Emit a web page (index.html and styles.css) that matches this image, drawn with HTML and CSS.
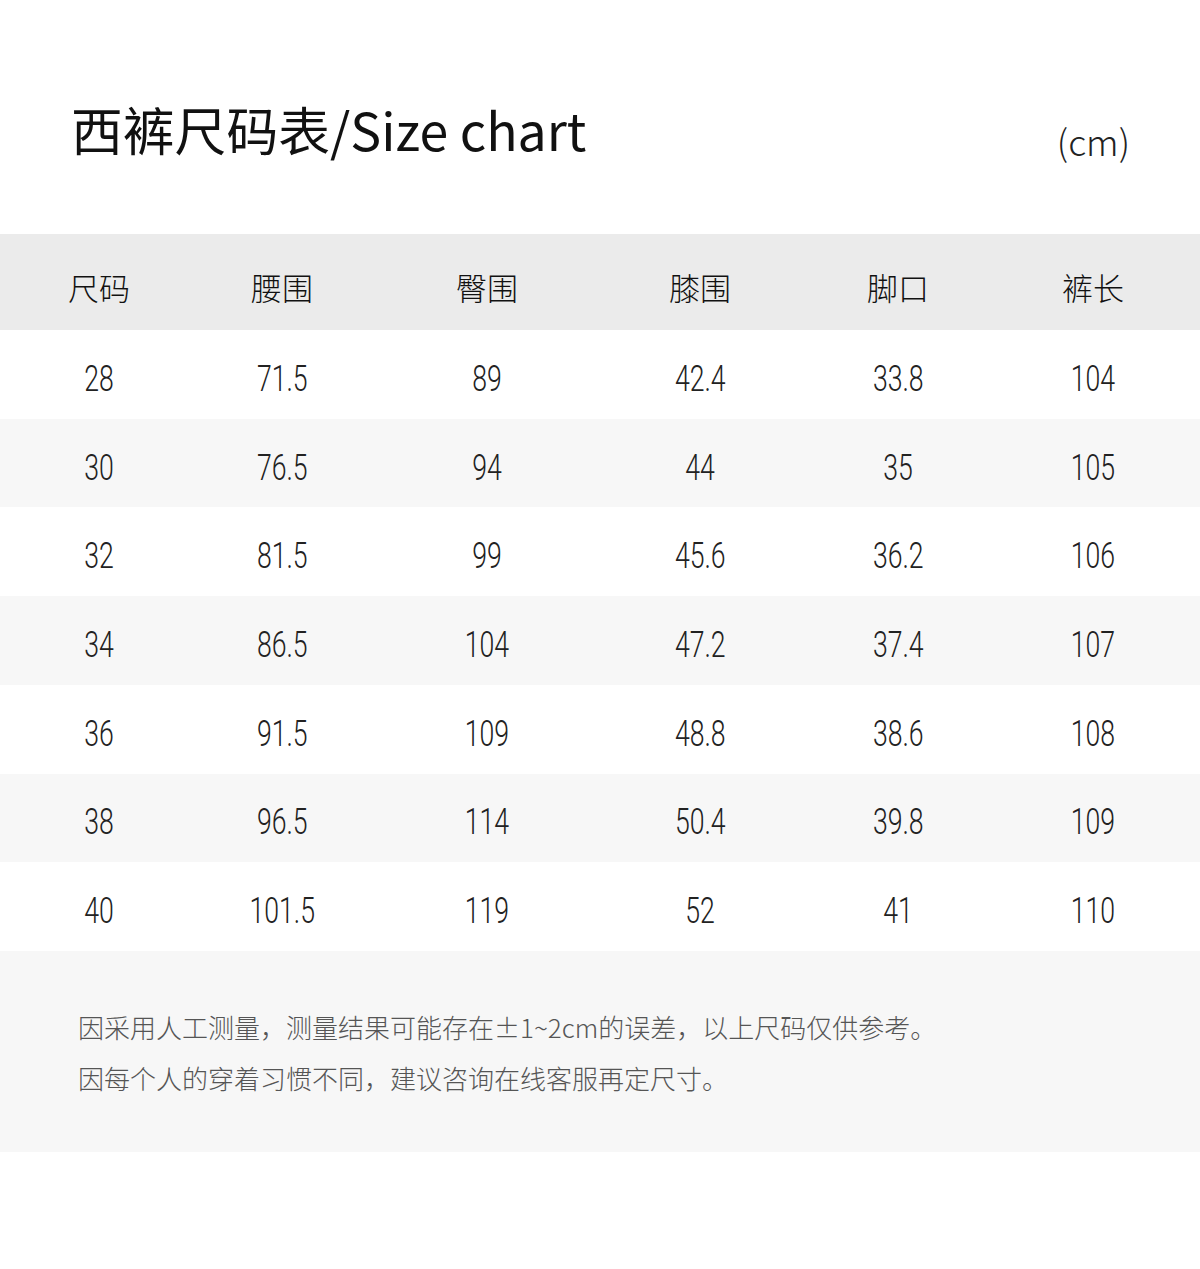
FILE: index.html
```html
<!DOCTYPE html>
<html lang="zh-CN">
<head>
<meta charset="utf-8">
<title>西裤尺码表</title>
<link rel="stylesheet" href="styles.css">
</head>
<body>
<div class="page">
  <div class="top">
    <h1 class="title">西裤尺码表/Size chart</h1>
    <div class="unit">(cm)</div>
  </div>
  <div class="table">
    <div class="row head">
      <div class="cell">尺码</div>
      <div class="cell">腰围</div>
      <div class="cell">臀围</div>
      <div class="cell">膝围</div>
      <div class="cell">脚口</div>
      <div class="cell">裤长</div>
    </div>
    <div class="row">
      <div class="cell"><span class="num">28</span></div>
      <div class="cell"><span class="num">71.5</span></div>
      <div class="cell"><span class="num">89</span></div>
      <div class="cell"><span class="num">42.4</span></div>
      <div class="cell"><span class="num">33.8</span></div>
      <div class="cell"><span class="num">104</span></div>
    </div>
    <div class="row alt">
      <div class="cell"><span class="num">30</span></div>
      <div class="cell"><span class="num">76.5</span></div>
      <div class="cell"><span class="num">94</span></div>
      <div class="cell"><span class="num">44</span></div>
      <div class="cell"><span class="num">35</span></div>
      <div class="cell"><span class="num">105</span></div>
    </div>
    <div class="row">
      <div class="cell"><span class="num">32</span></div>
      <div class="cell"><span class="num">81.5</span></div>
      <div class="cell"><span class="num">99</span></div>
      <div class="cell"><span class="num">45.6</span></div>
      <div class="cell"><span class="num">36.2</span></div>
      <div class="cell"><span class="num">106</span></div>
    </div>
    <div class="row alt">
      <div class="cell"><span class="num">34</span></div>
      <div class="cell"><span class="num">86.5</span></div>
      <div class="cell"><span class="num">104</span></div>
      <div class="cell"><span class="num">47.2</span></div>
      <div class="cell"><span class="num">37.4</span></div>
      <div class="cell"><span class="num">107</span></div>
    </div>
    <div class="row">
      <div class="cell"><span class="num">36</span></div>
      <div class="cell"><span class="num">91.5</span></div>
      <div class="cell"><span class="num">109</span></div>
      <div class="cell"><span class="num">48.8</span></div>
      <div class="cell"><span class="num">38.6</span></div>
      <div class="cell"><span class="num">108</span></div>
    </div>
    <div class="row alt">
      <div class="cell"><span class="num">38</span></div>
      <div class="cell"><span class="num">96.5</span></div>
      <div class="cell"><span class="num">114</span></div>
      <div class="cell"><span class="num">50.4</span></div>
      <div class="cell"><span class="num">39.8</span></div>
      <div class="cell"><span class="num">109</span></div>
    </div>
    <div class="row">
      <div class="cell"><span class="num">40</span></div>
      <div class="cell"><span class="num">101.5</span></div>
      <div class="cell"><span class="num">119</span></div>
      <div class="cell"><span class="num">52</span></div>
      <div class="cell"><span class="num">41</span></div>
      <div class="cell"><span class="num">110</span></div>
    </div>
  </div>
  <div class="notes">
    <p>因采用人工测量，测量结果可能存在±1~2cm的误差，以上尺码仅供参考。</p>
    <p>因每个人的穿着习惯不同，建议咨询在线客服再定尺寸。</p>
  </div>
</div>
</body>
</html>
```

FILE: styles.css
```css
* { box-sizing: border-box; }

html, body {
  margin: 0;
  padding: 0;
  background: #ffffff;
}

body {
  font-family: "Noto Sans CJK SC", "Noto Sans", sans-serif;
  color: #1a1a1a;
}

.page {
  width: 1200px;
  height: 1269px;
  background: #ffffff;
}

.top {
  height: 234px;
  display: flex;
  justify-content: space-between;
  align-items: flex-start;
  padding: 99px 70px 0 71px;
}

.title {
  margin: 0;
  font-size: 51.8px;
  font-weight: 400;
  line-height: 60px;
  color: #111111;
  letter-spacing: 0;
}

.unit {
  margin-top: 21px;
  font-size: 36px;
  font-weight: 300;
  line-height: 40px;
  color: #222222;
}

.table {
  display: flex;
  flex-direction: column;
}

.row {
  display: grid;
  grid-template-columns: 198px 168px 242px 184px 212px 178px;
  padding-right: 18px;
  height: 88.71px;
  align-items: center;
  background: #ffffff;
}

.row.alt {
  background: #f7f7f7;
}

.row.head {
  height: 96px;
  background: #ebebeb;
}

.cell {
  text-align: center;
}

.head .cell {
  font-size: 31px;
  font-weight: 300;
  color: #111111;
  line-height: 40px;
  padding-top: 9px;
}

.num {
  display: inline-block;
  font-family: Roboto, "Liberation Sans", sans-serif;
  font-size: 36px;
  font-weight: 300;
  color: #222222;
  line-height: 40px;
  transform: scaleX(0.74);
  padding-top: 9px;
}

.notes {
  background: #f7f7f7;
  height: 201px;
  padding: 50px 0 0 78px;
}

.notes p {
  margin: 0;
  font-size: 26px;
  font-weight: 300;
  line-height: 51px;
  color: #555555;
}
```
